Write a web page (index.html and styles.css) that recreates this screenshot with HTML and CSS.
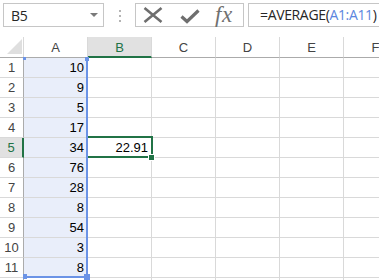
FILE: index.html
```html
<!DOCTYPE html>
<html>
<head>
<meta charset="utf-8">
<link rel="stylesheet" href="styles.css">
</head>
<body>
<div class="toolbar">
  <div class="namebox"><span class="name">B5</span><span class="caret"></span></div>
  <div class="grip"><i></i><i></i><i></i></div>
  <div class="fxbox">
    <svg class="ico-x" width="20" height="16" viewBox="0 0 20 16"><path d="M1.5 1 L18.5 15 M18.5 1 L1.5 15" stroke="#6e6e6e" stroke-width="2.6" fill="none"/></svg>
    <svg class="ico-ok" width="20" height="16" viewBox="0 0 20 16"><path d="M1.5 8.5 L7 13.5 L18.5 2.5" stroke="#6e6e6e" stroke-width="3.2" fill="none"/></svg>
    <span class="fx">fx</span>
  </div>
  <div class="formula">=AVERAGE(<span class="ref">A1:A11</span>)</div>
</div>
<div class="sheet">
  <div class="grid">
    <div class="corner"></div>
    <div class="ch">A</div><div class="ch sel">B</div><div class="ch">C</div><div class="ch">D</div><div class="ch">E</div><div class="ch">F</div>

    <div class="rh">1</div><div class="c a">10</div><div class="c"></div><div class="c"></div><div class="c"></div><div class="c"></div><div class="c"></div>
    <div class="rh">2</div><div class="c a">9</div><div class="c"></div><div class="c"></div><div class="c"></div><div class="c"></div><div class="c"></div>
    <div class="rh">3</div><div class="c a">5</div><div class="c"></div><div class="c"></div><div class="c"></div><div class="c"></div><div class="c"></div>
    <div class="rh">4</div><div class="c a">17</div><div class="c"></div><div class="c"></div><div class="c"></div><div class="c"></div><div class="c"></div>
    <div class="rh sel">5</div><div class="c a">34</div><div class="c active">22.91<span class="handle"></span></div><div class="c"></div><div class="c"></div><div class="c"></div><div class="c"></div>
    <div class="rh">6</div><div class="c a">76</div><div class="c"></div><div class="c"></div><div class="c"></div><div class="c"></div><div class="c"></div>
    <div class="rh">7</div><div class="c a">28</div><div class="c"></div><div class="c"></div><div class="c"></div><div class="c"></div><div class="c"></div>
    <div class="rh">8</div><div class="c a">8</div><div class="c"></div><div class="c"></div><div class="c"></div><div class="c"></div><div class="c"></div>
    <div class="rh">9</div><div class="c a">54</div><div class="c"></div><div class="c"></div><div class="c"></div><div class="c"></div><div class="c"></div>
    <div class="rh">10</div><div class="c a">3</div><div class="c"></div><div class="c"></div><div class="c"></div><div class="c"></div><div class="c"></div>
    <div class="rh">11</div><div class="c a">8</div><div class="c"></div><div class="c"></div><div class="c"></div><div class="c"></div><div class="c"></div>
    <div class="rh"></div><div class="c"></div><div class="c"></div><div class="c"></div><div class="c"></div><div class="c"></div><div class="c"></div>
  </div>
  <div class="range">
    <span class="knob tl"></span><span class="knob tr"></span><span class="knob bl"></span><span class="knob br"></span>
  </div>
</div>
</body>
</html>
```

FILE: styles.css
```css
html, body {
  margin: 0;
  padding: 0;
  background: #ffffff;
  width: 379px;
  height: 280px;
  overflow: hidden;
  font-family: "Liberation Sans", Arial, sans-serif;
}

.toolbar {
  height: 37px;
  display: flex;
  align-items: flex-start;
  padding: 3px 0 0 3px;
  box-sizing: border-box;
  white-space: nowrap;
}

.namebox {
  width: 101px;
  height: 24px;
  box-sizing: border-box;
  border: 1px solid #c6c6c6;
  display: flex;
  align-items: center;
  padding-left: 7px;
  padding-right: 5px;
}

.name {
  flex: 1;
  font-family: "Open Sans", "Liberation Sans", sans-serif;
  font-size: 14px;
  color: #262626;
  letter-spacing: -0.3px;
}

.caret {
  width: 0;
  height: 0;
  border-left: 4px solid transparent;
  border-right: 4px solid transparent;
  border-top: 4px solid #7a7a7a;
}

.grip {
  margin-left: 15px;
  margin-top: 7px;
  display: flex;
  flex-direction: column;
  gap: 3px;
}

.grip i {
  display: block;
  width: 2px;
  height: 2px;
  background: #b4b4b4;
}

.fxbox {
  margin-left: 14px;
  width: 109px;
  height: 24px;
  box-sizing: border-box;
  border: 1px solid #c6c6c6;
  display: flex;
  align-items: center;
  padding-left: 7px;
}

.ico-x { display: block; }
.ico-ok { display: block; margin-left: 17px; margin-top: 1px; }

.fx {
  margin-left: 15px;
  font-family: "Liberation Serif", "Times New Roman", serif;
  font-style: italic;
  font-size: 23px;
  color: #707070;
  line-height: 20px;
  letter-spacing: 0.5px;
}

.formula {
  margin-left: 4px;
  flex: 1;
  height: 24px;
  box-sizing: border-box;
  border: 1px solid #c6c6c6;
  border-right: none;
  padding-left: 11px;
  font-family: "Open Sans", "Liberation Sans", sans-serif;
  font-size: 14px;
  line-height: 21px;
  color: #262626;
  letter-spacing: -0.35px;
  overflow: hidden;
}

.ref { color: #5b86e0; }

.sheet {
  position: relative;
  height: 243px;
  overflow: hidden;
}

.grid {
  display: grid;
  grid-template-columns: 24px repeat(6, 64px);
  grid-template-rows: 21px;
  grid-auto-rows: 20px;
  font-size: 13px;
}

.grid > div {
  box-sizing: border-box;
  border-right: 1px solid #d9d9d9;
  border-bottom: 1px solid #d9d9d9;
}

.corner {
  position: relative;
  background: #ffffff;
  border-bottom-color: #ababab !important;
}

.corner::after {
  content: "";
  position: absolute;
  right: 1px;
  bottom: 3px;
  width: 0;
  height: 0;
  border-left: 15px solid transparent;
  border-bottom: 15px solid #dfdfdf;
}

.ch {
  border-bottom-color: #ababab !important;
  text-align: center;
  color: #444444;
  line-height: 21px;
}

.ch.sel {
  background: #e1e1e1;
  color: #217346;
  border-bottom: 2px solid #217346 !important;
}

.rh {
  border-right-color: #ababab !important;
  text-align: center;
  color: #444444;
  line-height: 20px;
}

.rh.sel {
  background: #e1e1e1;
  color: #217346;
  border-right: 2px solid #217346 !important;
}

.c {
  text-align: right;
  padding-right: 3px;
  line-height: 20px;
  color: #000000;
  position: relative;
}

.c.a {
  background: #e9eefa;
}

.c.active::before {
  content: "";
  position: absolute;
  left: -2px;
  top: -2px;
  right: -2px;
  bottom: -1px;
  border: 2px solid #217346;
  pointer-events: none;
}

.handle {
  position: absolute;
  right: -4px;
  bottom: -4px;
  width: 5px;
  height: 5px;
  background: #217346;
  border: 1px solid #ffffff;
  z-index: 2;
}

.range {
  position: absolute;
  left: 24px;
  top: 21px;
  width: 64px;
  height: 220px;
  box-sizing: border-box;
  border-right: 2px solid #6b93e6;
  border-bottom: 2px solid #6b93e6;
  pointer-events: none;
}

.knob {
  position: absolute;
  background: #6b93e6;
}

.knob.tl { left: -1px; top: -1px; width: 3px; height: 3px; }
.knob.tr { right: -3px; top: -1px; width: 4px; height: 4px; }
.knob.bl { left: -1px; bottom: -3px; width: 4px; height: 5px; }
.knob.br { right: -4px; bottom: -4px; width: 6px; height: 6px; }
```
